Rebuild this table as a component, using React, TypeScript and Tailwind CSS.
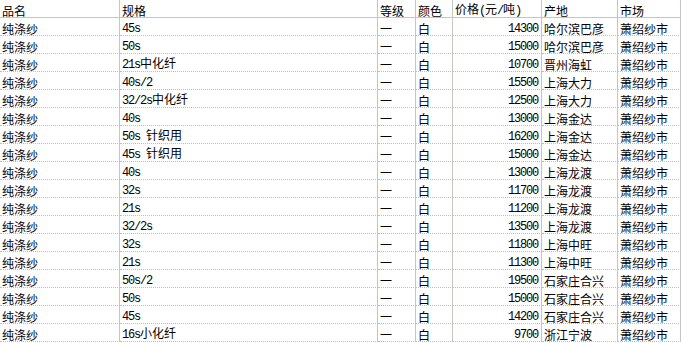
import React from 'react'

const header = ['品名', '规格', '等级', '颜色', '价格(元/吨)', '产地', '市场']

const rows = [
    ['45s', '14300', '哈尔滨巴彦'],
    ['50s', '15000', '哈尔滨巴彦'],
    ['21s中化纤', '10700', '晋州海虹'],
    ['40s/2', '15500', '上海大力'],
    ['32/2s中化纤', '12500', '上海大力'],
    ['40s', '13000', '上海金达'],
    ['50s 针织用', '16200', '上海金达'],
    ['45s 针织用', '15000', '上海金达'],
    ['40s', '13000', '上海龙渡'],
    ['32s', '11700', '上海龙渡'],
    ['21s', '11200', '上海龙渡'],
    ['32/2s', '13500', '上海龙渡'],
    ['32s', '11800', '上海中旺'],
    ['21s', '11300', '上海中旺'],
    ['50s/2', '19500', '石家庄合兴'],
    ['50s', '15000', '石家庄合兴'],
    ['45s', '14200', '石家庄合兴'],
    ['16s小化纤', '9700', '浙江宁波'],
]

// half-width runs get a 6px-wide mono face, like the old bitmap song font
const Txt = ({ s }: { s: string }) => (
    <span>
        {s.split(/([\x20-\x7e]+)/).filter(Boolean).map((part, i) =>
            /^[\x20-\x7e]+$/.test(part) ? (
                <span key={i} className="font-['Liberation_Mono',monospace] tracking-[-1.2px] whitespace-pre">{part}</span>
            ) : (
                <span key={i}>{part}</span>
            )
        )}
    </span>
)

const cols = 'grid grid-cols-[120px_258px_38px_37px_89px_76px_63px]'
const cell = 'h-[18px] flex items-end leading-[12px] pl-[2px] border-r border-r-[#c0c8c0] overflow-hidden whitespace-nowrap'

const App = () => {
    const data = rows.map(r => ['纯涤纱', r[0], '一', '白', r[1], r[2], '萧绍纱市'])
    return (
        <div className="w-[681px] h-[343px] bg-white text-black text-[12px] font-['Noto_Sans_CJK_SC',sans-serif] overflow-hidden">
            <div className={cols}>
                {header.map((h, j) => (
                    <div key={j} className={`${cell} border-b border-b-[#c0c8c0]`}>
                        <Txt s={h} />
                    </div>
                ))}
            </div>
            {data.map((r, i) => (
                <div key={i} className={cols}>
                    {r.map((v, j) => (
                        <div
                            key={j}
                            className={`${cell} border-b border-b-[#c8b4cc] [border-bottom-style:dotted] ${j === 4 ? 'justify-end pr-[3px]' : ''}`}
                        >
                            <Txt s={v} />
                        </div>
                    ))}
                </div>
            ))}
        </div>
    )
}

export default App
